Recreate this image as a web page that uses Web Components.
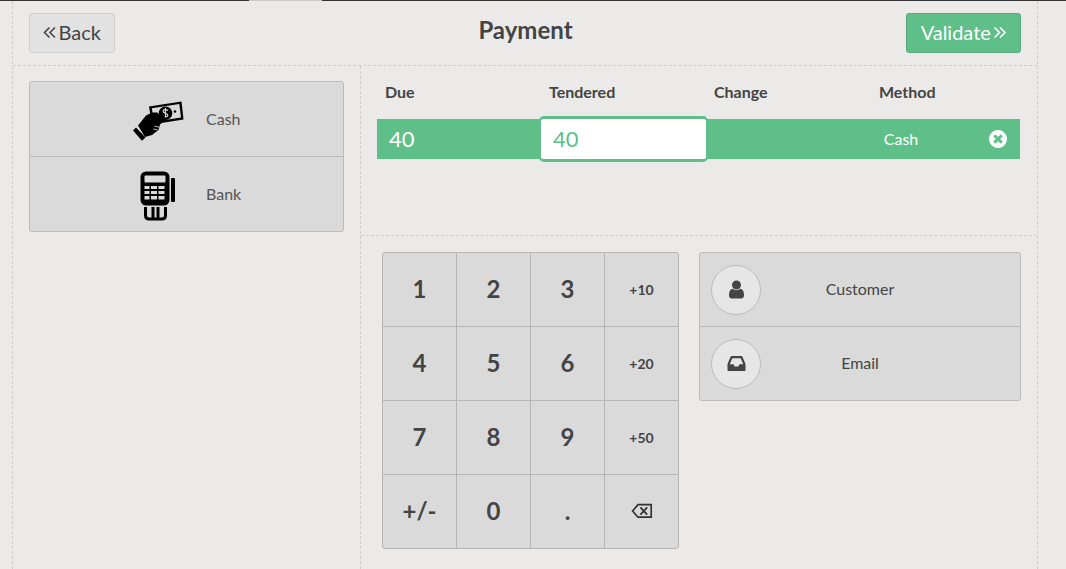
<!DOCTYPE html>
<html>
<head>
<meta charset="utf-8">
<title>Payment</title>
<style>
	html, body {
		margin: 0;
		height: 100%;
		background: #ebeae8;
		color: #444;
		font-family: Lato, "Liberation Sans", sans-serif;
		overflow: hidden;
	}
</style>
</head>
<body>
<payment-screen></payment-screen>

<script>
const ICONS = {
	user: '<svg viewBox="0 0 1792 1792" width="21" height="21"><path fill="#444" d="M1536 1399q0 109-62.5 187t-150.5 78h-854q-88 0-150.5-78t-62.5-187q0-85 8.5-160.5t31.5-152 58.5-131 94-89 134.5-34.5q131 128 313 128t313-128q76 0 134.5 34.5t94 89 58.5 131 31.5 152 8.5 160.5zm-256-887q0 159-112.5 271.5t-271.5 112.5-271.5-112.5-112.5-271.5 112.5-271.5 271.5-112.5 271.5 112.5 112.5 271.5z"/></svg>',
	inbox: '<svg viewBox="0 0 1792 1792" width="21" height="21"><path fill="#444" d="M1151 960h316q-1-3-2.5-8.5t-2.5-7.5l-212-496h-708l-212 496q-1 3-2.5 8.5t-2.5 7.5h316l95 192h320zm513 30v482q0 26-19 45t-45 19h-1408q-26 0-45-19t-19-45v-482q0-62 25-123l238-552q10-25 36.5-42t52.5-17h832q26 0 52.5 17t36.5 42l238 552q25 61 25 123z"/></svg>',
	remove: '<svg viewBox="128 128 1536 1536" width="18" height="18"><path fill="#fff" d="M1277 1122q0-26-19-45l-181-181 181-181q19-19 19-45 0-27-19-46l-90-90q-19-19-46-19-26 0-45 19l-181 181-181-181q-19-19-45-19-27 0-46 19l-90 90q-19 19-19 46 0 26 19 45l181 181-181 181q-19 19-19 45 0 27 19 46l90 90q19 19 46 19 26 0 45-19l181-181 181 181q19 19 45 19 27 0 46-19l90-90q19-19 19-46zm387-226q0 209-103 385.5t-279.5 279.5-385.5 103-385.5-103-279.5-279.5-103-385.5 103-385.5 279.5-279.5 385.5-103 385.5 103 279.5 279.5 103 385.5z"/></svg>',
	backspace: '<svg viewBox="0 0 22 16" width="22" height="16"><path fill="none" stroke="#333" stroke-width="1.7" d="M20.2 1.6H7L1.6 8 7 14.2h13.2z"/><path fill="none" stroke="#333" stroke-width="1.8" d="M9.4 4.4l6.8 7.2M16.2 4.4l-6.8 7.2"/></svg>',
	cash: `<svg viewBox="0 0 52 41" width="52" height="41">
		<path fill="#000" d="M17 6.500L49.500 1.500l2 18L20 24.500z"/>
		<path fill="#dadada" d="M19.800 8.300L47.300 4l1.700 13.400-27 4.300z"/>
		<circle cx="33.500" cy="13.300" r="6.800" fill="#000"/>
		<circle cx="24.500" cy="14.500" r="1.300" fill="#000"/>
		<circle cx="43" cy="11.500" r="1.300" fill="#000"/>
		<path fill="none" stroke="#dadada" stroke-width="1.200" d="M36 10.600q-2.500-1.800-4.500-.3-1 2 2 3 3 1 2 3-2 1.500-4.500-.3M33.500 8.100v10.400"/>
		<path fill="#000" d="M6 25.500l8-10 6-3h5.500l2.500 3.500 4-.5 2.500 3.500-6.500 5.500-1.500 5.500-6.500 5-7 2z"/>
		<path fill="#000" d="M1 30.500l3-3 9.500 10-3.500 3.300z"/>
		<path fill="none" stroke="#dadada" stroke-width="0.900" d="M22.500 26l4.500 1.200M21.500 29l4 1"/>
	</svg>`,
	terminal: `<svg viewBox="0 0 36 50" width="36" height="50">
		<rect x="2" y="2" width="26" height="31" rx="4" fill="#000" stroke="#000" stroke-width="3"/>
		<rect x="4.500" y="4.500" width="21" height="7" rx="1" fill="#dadada"/>
		<path fill="#dadada" d="M4.500 15h5v3h-5zM11 15h6v3h-6zM18.500 15h6v3h-6zM4.500 20h5v3h-5zM11 20h6v3h-6zM18.500 20h6v3h-6zM4.500 25h5v3.500h-5zM11 25h6v3.500h-6zM18.500 25h6v3.500h-6z"/>
		<rect x="31" y="7" width="4" height="24" rx="1" fill="#000"/>
		<path fill="#000" d="M4 36h3v8q0 2.500 2.500 2.500h2V36h3v10.500h2V36h3v10.500h2q2.500 0 2.500-2.500v-8h3v8.500q0 5-5 5h-13q-5 0-5-5z"/>
	</svg>`,
};

function doubleAngle(dir, color) {
	const d = dir === 'left'
		? 'M6.500 1.500L1.500 6.500l5 5M12 1.500L7 6.500l5 5'
		: 'M1.500 1.500l5 5-5 5M7 1.500l5 5-5 5';
	return `<svg viewBox="0 0 13.500 13" width="13.500" height="13"><path fill="none" stroke="${color}" stroke-width="1.600" d="${d}"/></svg>`;
}

class TopStrip extends HTMLElement {
	connectedCallback() {
		this.attachShadow({ mode: 'open' }).innerHTML = `
			<style>
				:host { display: flex; height: 1px; background: #333; }
				.a { width: 249px; }
				.b { width: 73px; background: #c9c9c9; }
			</style>
			<div class="a"></div><div class="b"></div>
		`;
	}
}

class ActionButton extends HTMLElement {
	connectedCallback() {
		const dir = this.getAttribute('dir-icon');
		const primary = this.hasAttribute('primary');
		const icon = doubleAngle(dir, primary ? '#fff' : '#444');
		this.attachShadow({ mode: 'open' }).innerHTML = `
			<style>
				:host {
					display: flex;
					align-items: center;
					justify-content: center;
					gap: 2px;
					box-sizing: border-box;
					height: 40px;
					padding-bottom: 2px;
					font-size: 20px;
					border-radius: 3px;
					border: 1px solid ${primary ? '#54a97a' : '#cfcfcf'};
					background: ${primary ? '#5ebf88' : '#e2e2e2'};
					color: ${primary ? '#fff' : '#444'};
				}
			</style>
			${dir === 'left' ? icon : ''}<slot></slot>${dir === 'right' ? icon : ''}
		`;
	}
}

class MethodButton extends HTMLElement {
	connectedCallback() {
		this.attachShadow({ mode: 'open' }).innerHTML = `
			<style>
				:host {
					display: flex;
					align-items: center;
					height: 74px;
					box-sizing: border-box;
					padding-left: 88px;
					font-size: 16px;
					color: #555;
				}
				:host(:not(:last-child)) { border-bottom: 1px solid #bbb; height: 75px; }
				.icon { width: 80px; display: flex; justify-content: center; margin-top: 3px; }
				.label { margin-left: 8px; padding-bottom: 2px; }
			</style>
			<div class="icon"><slot name="icon"></slot></div>
			<div class="label"><slot></slot></div>
		`;
	}
}

class ButtonGroup extends HTMLElement {
	connectedCallback() {
		this.attachShadow({ mode: 'open' }).innerHTML = `
			<style>
				:host {
					display: block;
					border: 1px solid #bbb;
					border-radius: 3px;
					background: #dadada;
					overflow: hidden;
				}
			</style>
			<slot></slot>
		`;
	}
}

class PaymentLines extends HTMLElement {
	connectedCallback() {
		this.attachShadow({ mode: 'open' }).innerHTML = `
			<style>
				:host {
					display: block;
					box-sizing: border-box;
					height: 170px;
					padding: 0 17px 0 16px;
					border-bottom: 1px dashed #cecece;
				}
				.head {
					display: grid;
					grid-template-columns: 164px 165px 165px 1fr;
					padding: 16px 0 0 8px;
					height: 53px;
					box-sizing: border-box;
					font-size: 16px;
					font-weight: 700;
					line-height: 20px;
					color: #444;
				}
				.row {
					display: grid;
					grid-template-columns: 162px 169px 123px 140px 1fr;
					align-items: center;
					height: 40px;
					background: #5ebf88;
					color: #fff;
				}
				.due { font-size: 22px; padding: 0 0 2px 12px; }
				.tendered {
					box-sizing: border-box;
					height: 46px;
					margin: -3px 0;
					padding: 0 0 2px 12px;
					display: flex;
					align-items: center;
					font-size: 22px;
					color: #5ebf88;
					background: #fff;
					border: solid #5ebf88;
					border-width: 3px 2px;
					border-radius: 5px;
				}
				.method { font-size: 16px; text-align: center; padding-bottom: 1px; }
				.remove { display: flex; justify-content: flex-end; padding-right: 13px; }
				svg { display: block; }
			</style>
			<div class="head"><div>Due</div><div>Tendered</div><div>Change</div><div>Method</div></div>
			<div class="row">
				<div class="due">40</div>
				<div class="tendered">40</div>
				<div></div>
				<div class="method">Cash</div>
				<div class="remove">${ICONS.remove}</div>
			</div>
		`;
	}
}

class NumPad extends HTMLElement {
	connectedCallback() {
		const keys = ['1', '2', '3', '+10', '4', '5', '6', '+20', '7', '8', '9', '+50', '+/-', '0', '.', 'back'];
		const cells = keys.map((key) => {
			if (key === 'back') return `<div class="key">${ICONS.backspace}</div>`;
			const small = key.length === 3 && key !== '+/-';
			return `<div class="key${small ? ' small' : ''}">${key}</div>`;
		}).join('');
		this.attachShadow({ mode: 'open' }).innerHTML = `
			<style>
				:host {
					display: grid;
					grid-template-columns: repeat(4, 73px);
					grid-auto-rows: 73px;
					gap: 1px;
					background: #b5b5b5;
					border: 1px solid #b5b5b5;
					border-radius: 3px;
					overflow: hidden;
				}
				.key {
					display: flex;
					align-items: center;
					justify-content: center;
					box-sizing: border-box;
					padding-bottom: 2px;
					background: #dadada;
					font-size: 24px;
					font-weight: 700;
					color: #444;
				}
				.small { font-size: 14px; padding-bottom: 0; }
			</style>
			${cells}
		`;
	}
}

class ClientButton extends HTMLElement {
	connectedCallback() {
		this.attachShadow({ mode: 'open' }).innerHTML = `
			<style>
				:host {
					display: flex;
					align-items: center;
					box-sizing: border-box;
					height: 73px;
					padding-left: 11px;
					font-size: 16px;
					color: #444;
				}
				:host(:not(:last-child)) { border-bottom: 1px solid #bbb; height: 74px; }
				.circle {
					box-sizing: border-box;
					width: 50px;
					height: 50px;
					display: flex;
					align-items: center;
					justify-content: center;
					border-radius: 50%;
					border: 1px solid #bbb;
					background: #e6e6e6;
				}
				.label { flex: 1; text-align: center; padding: 0 61px 3px 0; }
			</style>
			<div class="circle"><slot name="icon"></slot></div>
			<div class="label"><slot></slot></div>
		`;
	}
}

class PaymentScreen extends HTMLElement {
	connectedCallback() {
		this.attachShadow({ mode: 'open' }).innerHTML = `
			<style>
				:host { display: block; height: 569px; overflow: hidden; }
				.frame {
					box-sizing: border-box;
					width: 1026px;
					height: 568px;
					margin-left: 12px;
					border-left: 1px dashed #cecece;
					border-right: 1px dashed #cecece;
				}
				.top {
					box-sizing: border-box;
					height: 65px;
					padding: 12px 16px 0;
					display: grid;
					grid-template-columns: 86px 1fr 115px;
					border-bottom: 1px dashed #cecece;
				}
				h1 {
					margin: 0;
					padding: 3px 0 0 30px;
					font-size: 24px;
					line-height: 28px;
					font-weight: 700;
					text-align: center;
					color: #444;
				}
				.body { display: flex; height: 503px; }
				.left {
					box-sizing: border-box;
					width: 348px;
					padding: 15px 16px 0;
					border-right: 1px dashed #cecece;
				}
				.right { flex: 1; }
				.controls {
					display: flex;
					gap: 20px;
					align-items: flex-start;
					padding: 16px 16px 0 21px;
				}
				button-group.clients { flex: 1; }
				svg { display: block; }
			</style>
			<top-strip></top-strip>
			<div class="frame">
				<div class="top">
					<action-button dir-icon="left">Back</action-button>
					<h1>Payment</h1>
					<action-button dir-icon="right" primary>Validate</action-button>
				</div>
				<div class="body">
					<div class="left">
						<button-group>
							<method-button><span slot="icon">${ICONS.cash}</span>Cash</method-button>
							<method-button><span slot="icon">${ICONS.terminal}</span>Bank</method-button>
						</button-group>
					</div>
					<div class="right">
						<payment-lines></payment-lines>
						<div class="controls">
							<num-pad></num-pad>
							<button-group class="clients">
								<client-button><span slot="icon">${ICONS.user}</span>Customer</client-button>
								<client-button><span slot="icon">${ICONS.inbox}</span>Email</client-button>
							</button-group>
						</div>
					</div>
				</div>
			</div>
		`;
	}
}

customElements.define('top-strip', TopStrip);
customElements.define('action-button', ActionButton);
customElements.define('method-button', MethodButton);
customElements.define('button-group', ButtonGroup);
customElements.define('payment-lines', PaymentLines);
customElements.define('num-pad', NumPad);
customElements.define('client-button', ClientButton);
customElements.define('payment-screen', PaymentScreen);
</script>
</body>
</html>
